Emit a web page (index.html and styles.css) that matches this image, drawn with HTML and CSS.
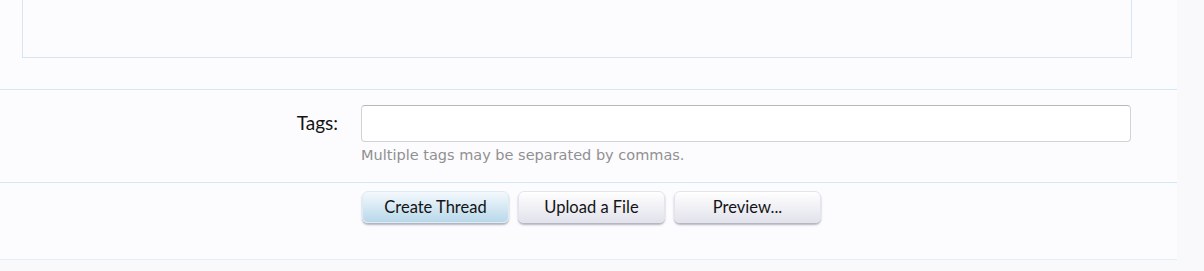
FILE: index.html
```html
<!DOCTYPE html>
<html>
<head>
<meta charset="utf-8">
<link rel="stylesheet" href="styles.css">
</head>
<body>
<div class="page">
  <div class="content">
    <div class="editor-wrap">
      <div class="editor"></div>
    </div>
    <div class="row tags-row">
      <div class="label">Tags:</div>
      <div class="field">
        <input class="text-input" type="text">
        <div class="hint">Multiple tags may be separated by commas.</div>
      </div>
    </div>
    <div class="row buttons-row">
      <div class="label"></div>
      <div class="field buttons">
        <button class="btn primary">Create Thread</button>
        <button class="btn">Upload a File</button>
        <button class="btn">Preview...</button>
      </div>
    </div>
  </div>
</div>
</body>
</html>
```
FILE: styles.css
```css
html, body {
  margin: 0;
  padding: 0;
  background: #f9f9fc;
}
.page {
  width: 1204px;
  height: 271px;
  overflow: hidden;
}
.content {
  width: 1177px;
  background: #fcfcff;
  font-family: "Lato", "Liberation Sans", sans-serif;
}
.editor-wrap {
  padding: 0 45px 0 22px;
  height: 89px;
}
.editor {
  height: 57px;
  border: 1px solid #d6e6f1;
  border-top: none;
  width: 1108px;
}
.row {
  display: flex;
  border-top: 1px solid #d2e8f4;
  box-shadow: 0 1px 0 #e0eef7;
}
.label {
  width: 338px;
  text-align: right;
  font-size: 19px;
  color: #141414;
  box-sizing: border-box;
}
.field {
  margin-left: 23px;
}
.tags-row {
  height: 93px;
  box-sizing: border-box;
  padding-top: 15px;
}
.tags-row .label {
  padding-top: 6px;
}
.text-input {
  display: block;
  width: 770px;
  height: 37px;
  box-sizing: border-box;
  border: 1px solid #d2d2d6;
  border-top-color: #b8b8bc;
  border-radius: 4px;
  background: #fff;
  margin: 0;
  padding: 0 6px;
  font: inherit;
}
.hint {
  margin-top: 5px;
  font-family: "DejaVu Sans", sans-serif;
  font-size: 14.5px;
  color: #909090;
}
.buttons-row {
  height: 77px;
  box-sizing: border-box;
  padding-top: 8px;
}
.buttons {
  display: flex;
  gap: 9px;
  margin-left: 24px;
}
.btn {
  height: 32px;
  width: 147px;
  border: 1px solid #e4e4ec;
  border-radius: 6px;
  background: linear-gradient(#ffffff, #e2e2ec);
  box-shadow: 0 2px 2px rgba(90, 90, 115, 0.45);
  font-family: "Lato", "Liberation Sans", sans-serif;
  font-size: 16.5px;
  color: #141414;
  padding: 0;
  margin: 0;
}
.btn.primary {
  background: linear-gradient(#f4f9fd, #b8d8ea);
  border-color: #dcebf4;
}
```
